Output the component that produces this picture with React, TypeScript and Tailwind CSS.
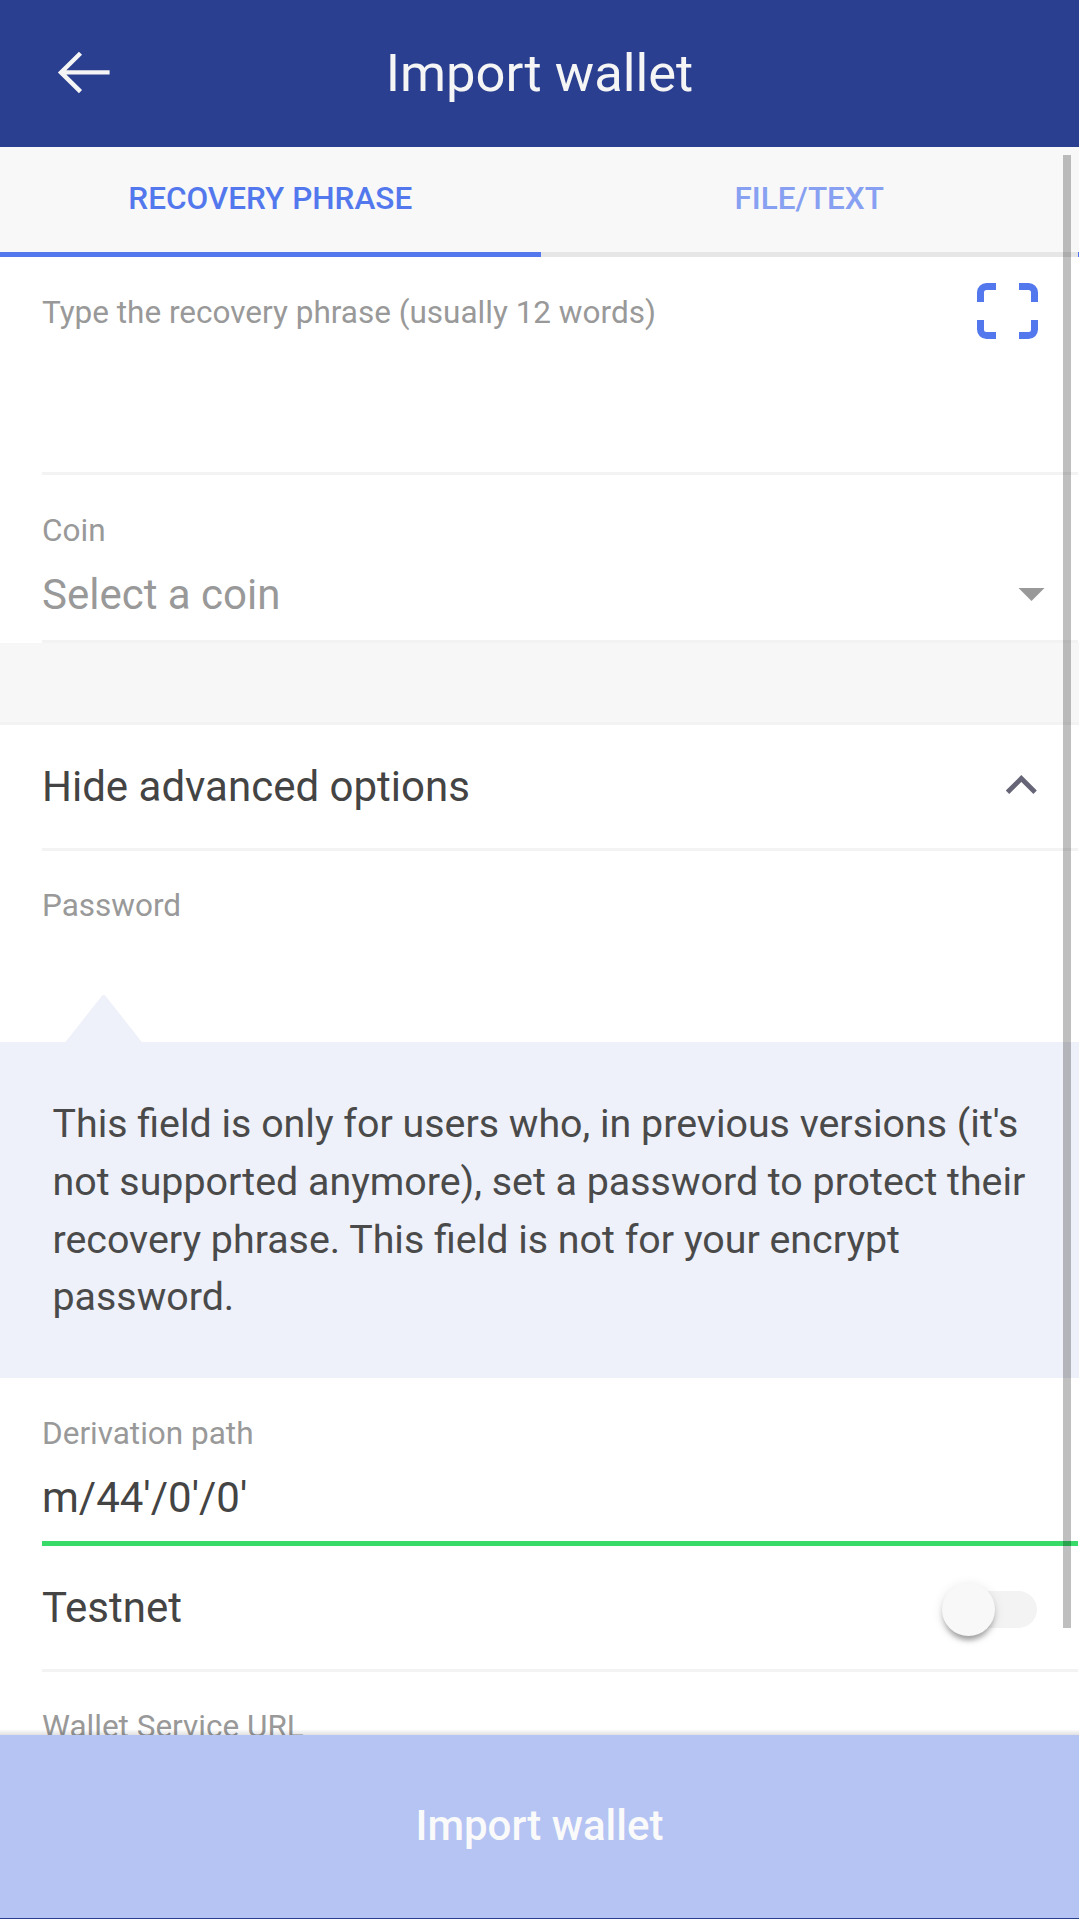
import type { ReactNode } from "react";

function Header() {
  return (
    <header className="relative flex h-[147px] shrink-0 items-center justify-center bg-[#2a3f8f] text-[#f5f5f5]">
      <button aria-label="Back" className="absolute top-[51px] left-[57px]">
        <svg width="54" height="43" viewBox="0 0 54 43" fill="none" stroke="currentColor" strokeWidth="4.4">
          <path d="M23.5 2.2 4 21.4l19.5 19.2M4 21.4h48.6" />
        </svg>
      </button>
      <h1 className="pb-[2px] text-[52.5px] leading-[60px]">Import wallet</h1>
    </header>
  );
}

function Tabs() {
  return (
    <nav className="flex h-[110px] shrink-0 bg-[#f8f8f8] text-[31.5px] leading-[100px] font-medium">
      <button className="w-[540.5px] border-b-5 border-[#5378ed] pb-px text-[#5378ed]">RECOVERY PHRASE</button>
      <button className="w-[537.5px] border-b-5 border-[#e6e6e6] pb-px text-[#87a0f1]">FILE/TEXT</button>
      <span className="w-px border-b-5 border-[#5378ed]" />
    </nav>
  );
}

function Label({ children }: { children: ReactNode }) {
  return <div className="text-[31.5px] leading-[42px] text-[#999]">{children}</div>;
}

export default function App() {
  return (
    <div className="relative flex h-[1919px] w-[1079px] flex-col overflow-hidden bg-white font-['Roboto',sans-serif] text-[#444]">
      <Header />
      <Tabs />

      <main className="flex h-[1478px] shrink-0 flex-col overflow-hidden">
        <section className="mr-px ml-[42px] flex h-[218px] shrink-0 justify-between border-b-3 border-[#f3f3f3] pt-[26px] pr-[40px]">
          <div className="pt-[9px]">
            <Label>Type the recovery phrase (usually 12 words)</Label>
          </div>
          <svg width="61" height="56" viewBox="0 0 61 56" fill="none" stroke="#5378ed" strokeWidth="7">
            <path d="M3.5 19V9.5a6 6 0 0 1 6-6H19M42 3.5h9.500a6 6 0 0 1 6 6V19M57.500 37v9.500a6 6 0 0 1-6 6H42M19 52.500H9.500a6 6 0 0 1-6-6V37" />
          </svg>
        </section>

        <section className="mr-px ml-[42px] h-[168px] shrink-0 border-b-3 border-[#f3f3f3] pt-[35px]">
          <Label>Coin</Label>
          <div className="mt-[13px] flex items-center justify-between pr-[33px] text-[42px] leading-[60px] text-[#999]">
            <span>Select a coin</span>
            <svg className="-mt-[2px]" width="27" height="13" viewBox="0 0 27 13" fill="#999">
              <path d="M0.500 0h26l-13 13z" />
            </svg>
          </div>
        </section>

        <div className="h-[82px] shrink-0 border-b-3 border-[#f3f3f3] bg-[#f7f7f7]" />

        <section className="mr-px ml-[42px] flex h-[126px] shrink-0 items-center justify-between border-b-3 border-[#f3f3f3] pr-[41px]">
          <span className="text-[42px] leading-[60px]">Hide advanced options</span>
          <svg className="-mt-[5px]" width="31" height="19" viewBox="0 0 31 19" fill="none" stroke="#666577" strokeWidth="4.800">
            <path d="M1.500 17.200 15.300 3.500l13.800 13.700" />
          </svg>
        </section>

        <section className="flex h-[191px] shrink-0 flex-col justify-between pt-[34px] pl-[42px]">
          <Label>Password</Label>
          <svg className="ml-[23px]" width="78" height="48" viewBox="0 0 78 48" fill="#eef1f9">
            <path d="M0.500 48 36.600 2.200q2.100-2.600 4.200 0L76.800 48z" />
          </svg>
        </section>

        <p className="h-[336px] shrink-0 bg-[#eef1f9] pt-[53px] pl-[52.5px] text-[39.375px] leading-[57.750px] text-[#4a4a4a]">
          This field is only for users who, in previous versions (it's
          <br />
          not supported anymore), set a password to protect their
          <br />
          recovery phrase. This field is not for your encrypt
          <br />
          password.
        </p>

        <section className="mr-px ml-[42px] h-[168px] shrink-0 border-b-5 border-[#38da68] pt-[35px]">
          <Label>Derivation path</Label>
          <div className="mt-[13px] text-[42px] leading-[60px]">m/44'/0'/0'</div>
        </section>

        <section className="mr-px ml-[42px] flex h-[126px] shrink-0 items-center justify-between border-b-3 border-[#f3f3f3] pr-[41px]">
          <span className="text-[42px] leading-[60px]">Testnet</span>
          <div className="relative mt-[3px] h-[37px] w-[92px] rounded-full bg-[#f3f3f3]">
            <div className="absolute -top-[8px] -left-[3px] size-[53px] rounded-full bg-[#f8f8f8] shadow-[0_8px_5px_-5px_rgba(0,0,0,0.2),0_5px_5px_0_rgba(0,0,0,0.17),0_2px_12px_0_rgba(0,0,0,0.1)]" />
          </div>
        </section>

        <section className="pt-[34px] pl-[42px]">
          <Label>Wallet Service URL</Label>
        </section>
      </main>

      <footer className="relative flex h-[184px] shrink-0 items-center justify-center border-b border-[#2a3f8f] bg-[#b5c4f3]">
        <div className="absolute inset-x-0 -top-[5px] h-[5px] bg-gradient-to-b from-black/2 to-black/12" />
        <button className="pb-[2px] text-[42px] leading-[60px] font-medium text-[#fafafa]">Import wallet</button>
      </footer>

      <div className="absolute top-[155px] right-[8px] h-[1473px] w-[8px] bg-black/25" />
    </div>
  );
}
